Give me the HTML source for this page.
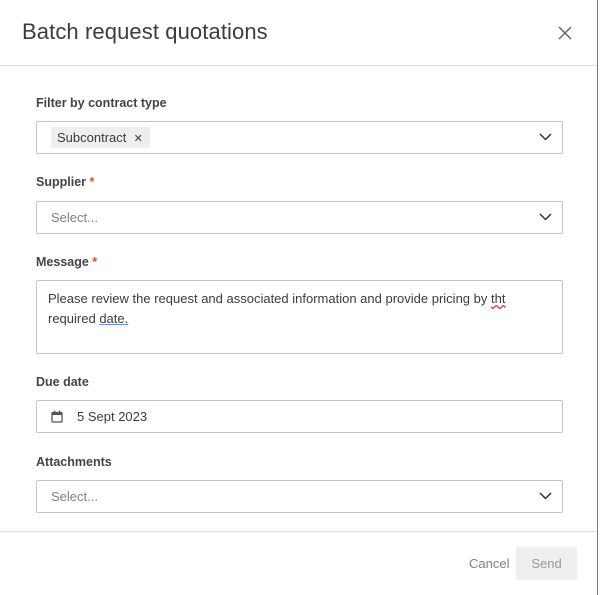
<!DOCTYPE html>
<html><head><style>
*{box-sizing:border-box;margin:0;padding:0}
body{width:600px;height:595px;background:#fff;font-family:"Liberation Sans",sans-serif;color:#3c3c3c;position:relative;overflow:hidden}
.edge{position:absolute;right:2px;top:0;width:1px;height:595px;background:#777}
.title{position:absolute;left:22px;top:19px;font-size:22px;color:#3c3c3c;letter-spacing:0.1px}
.hr{position:absolute;left:0;width:597px;height:1px;background:#ddd}
.lbl{position:absolute;left:36px;font-size:12.5px;font-weight:bold;color:#444}
.lbl span{color:#d74e26}
.in{position:absolute;left:36px;width:527px;height:33px;border:1px solid #c4c4c4;border-radius:2px;font-size:13px}
.ph{position:absolute;left:14px;top:8px;color:#808080}
.chev{position:absolute;right:10px;top:10px}
.chip{position:absolute;left:14px;top:5px;height:21px;background:#eee;border-radius:2px;padding:3px 7px 0 6px;font-size:13px;color:#3c3c3c}
</style></head><body>
<div class="edge"></div>
<div class="title">Batch request quotations</div>
<svg style="position:absolute;left:558px;top:26px" width="14" height="14" viewBox="0 0 14 14"><path d="M1 1L13 13M13 1L1 13" stroke="#666" stroke-width="1.5"/></svg>
<div class="hr" style="top:65px"></div>

<div class="lbl" style="top:96px">Filter by contract type</div>
<div class="in" style="top:121px"><div class="chip">Subcontract &nbsp;<span style="font-size:11px">✕</span></div>
<svg class="chev" width="13" height="10" viewBox="0 0 13 10"><path d="M1 2L6.5 7.5L12 2" fill="none" stroke="#333" stroke-width="1.5"/></svg></div>

<div class="lbl" style="top:175px">Supplier <span>*</span></div>
<div class="in" style="top:201px"><div class="ph">Select...</div>
<svg class="chev" width="13" height="10" viewBox="0 0 13 10"><path d="M1 2L6.5 7.5L12 2" fill="none" stroke="#333" stroke-width="1.5"/></svg></div>

<div class="lbl" style="top:255px">Message <span>*</span></div>
<div class="in" style="top:280px;height:74px"><div style="position:absolute;left:11px;top:8px;width:505px;line-height:20px;font-size:13px;color:#3c3c3c">Please review the request and associated information and provide pricing by <span style="text-decoration:underline wavy #e03030">tht</span> required <span style="text-decoration:underline #6b8cf0">date.</span></div></div>

<div class="lbl" style="top:375px">Due date</div>
<div class="in" style="top:400px">
<svg style="position:absolute;left:14px;top:9px" width="12" height="13" viewBox="0 0 12 13"><rect x="1" y="2.5" width="10" height="9.5" rx="1" fill="none" stroke="#555" stroke-width="1.3"/><rect x="1" y="2.5" width="10" height="2.5" fill="#555"/><path d="M3.5 0.5V3M8.5 0.5V3" stroke="#555" stroke-width="1.3"/></svg>
<div style="position:absolute;left:40px;top:8px;color:#3c3c3c">5 Sept 2023</div></div>

<div class="lbl" style="top:455px">Attachments</div>
<div class="in" style="top:480px"><div class="ph">Select...</div>
<svg class="chev" width="13" height="10" viewBox="0 0 13 10"><path d="M1 2L6.5 7.5L12 2" fill="none" stroke="#333" stroke-width="1.5"/></svg></div>

<div class="hr" style="top:531px"></div>
<div style="position:absolute;left:469px;top:556px;font-size:13px;color:#808080">Cancel</div>
<div style="position:absolute;left:516px;top:547px;width:61px;height:33px;background:#eee;color:#999;font-size:13px;text-align:center;line-height:33px">Send</div>
</body></html>
